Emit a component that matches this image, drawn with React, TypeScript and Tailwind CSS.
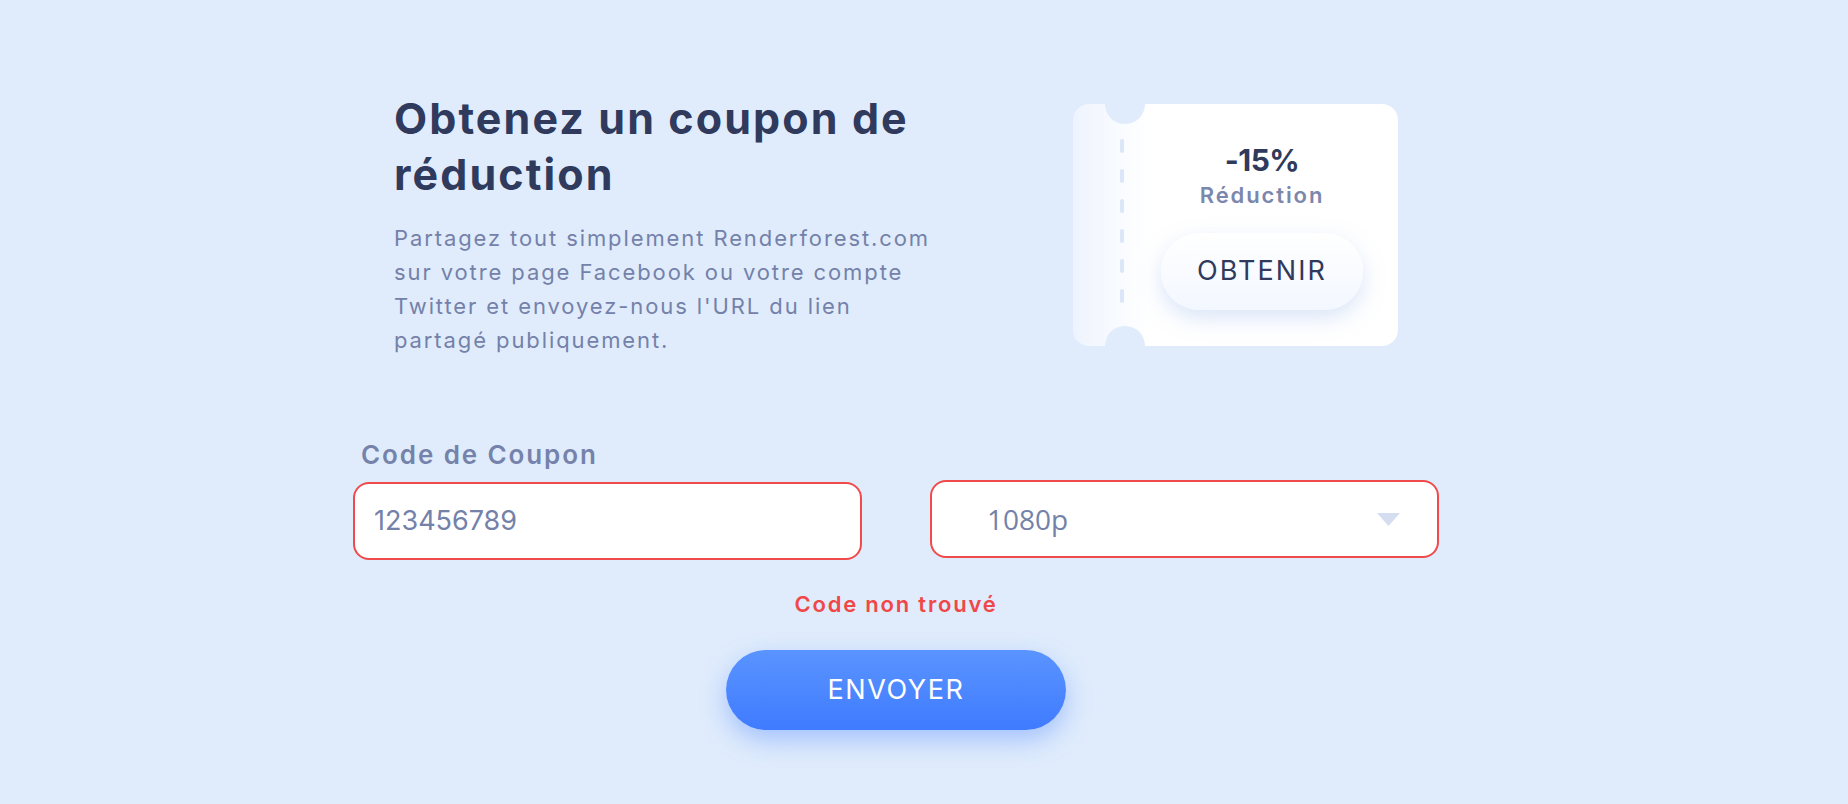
import React from "react";

export default function App() {
  const font = { fontFamily: "Inter, 'Noto Sans', sans-serif" };
  return (
    <div className="min-h-[804px] w-full bg-[#e0ecfc]" style={font}>
      <div className="flex justify-center pr-[56px]">
        <div className="w-[1086px] pt-[90px]">
          {/* top section */}
          <div className="flex items-start justify-between pl-[41px] pr-[41px]">
            <div>
              <h1 className="text-[43px] leading-[56px] font-bold text-[#2f3a5c] whitespace-nowrap tracking-[2.1px]">
                Obtenez un coupon de
                <br />
                réduction
              </h1>
              <p className="mt-[19px] text-[22px] leading-[34px] text-[#7481a9] whitespace-nowrap tracking-[1.9px]">
                Partagez tout simplement Renderforest.com
                <br />
                sur votre page Facebook ou votre compte
                <br />
                Twitter et envoyez-nous l'URL du lien
                <br />
                partagé publiquement.
              </p>
            </div>
            <div className="relative mt-[14px] flex h-[242px] w-[325px] rounded-[16px] bg-[linear-gradient(to_right,#eef4fe_0px,#ffffff_75px)]">
              <div className="absolute left-[32px] top-[-20px] h-[40px] w-[40px] rounded-full bg-[#e0ecfc]" />
              <div className="absolute left-[32px] bottom-[-20px] h-[40px] w-[40px] rounded-full bg-[#e0ecfc]" />
              <div className="w-[53px] shrink-0 flex justify-end">
                <div className="mt-[35px] mr-[2px] flex flex-col gap-[16px]">
                  {[0, 1, 2, 3, 4, 5].map((i) => (
                    <div key={i} className="h-[14px] w-[4px] rounded-full bg-[#dbe6f8]" />
                  ))}
                </div>
              </div>
              <div className="flex flex-1 flex-col items-center pt-[38px]">
                <div className="text-[30px] leading-[36px] font-bold text-[#2f3a5c] tracking-[-0.5px]">-15%</div>
                <div className="mt-[3px] text-[22px] leading-[28px] font-semibold text-[#7b87ad] tracking-[1.9px]">Réduction</div>
                <button className="mt-[24px] flex h-[77px] w-[202px] items-center justify-center rounded-full bg-[linear-gradient(to_bottom,#ffffff,#f3f7ff)] text-[27px] text-[#2f3a5c] tracking-[2.1px] shadow-[0_8px_22px_rgba(150,180,235,0.35)]">
                  OBTENIR
                </button>
              </div>
            </div>
          </div>

          {/* form */}
          <div className="mt-[83px]">
            <div className="pl-[8px] text-[26px] leading-[30px] font-semibold text-[#7583ab] tracking-[1.9px]">Code de Coupon</div>
            <div className="mt-[10px] flex items-start justify-between">
              <div className="mt-[2px] flex h-[78px] w-[509px] items-center rounded-[16px] border-2 border-[#f04a4a] bg-white pl-[19px] text-[27px] text-[#7481a9]">
                123456789
              </div>
              <div className="flex h-[78px] w-[509px] items-center justify-between rounded-[16px] border-2 border-[#f04a4a] bg-white pl-[55px] pr-[37px]">
                <span className="text-[28px] text-[#7481a9]" style={{ fontFamily: "'Open Sans', sans-serif" }}>1080p</span>
                <svg width="23" height="13" viewBox="0 0 23 13">
                  <path d="M0 0 L23 0 L11.5 13 Z" fill="#d5def0" />
                </svg>
              </div>
            </div>
            <div className="mt-[31px] text-center text-[22px] leading-[26px] font-semibold text-[#f04848] tracking-[1.8px]">
              Code non trouvé
            </div>
            <div className="mt-[33px] flex justify-center">
              <button className="flex h-[80px] w-[340px] items-center justify-center rounded-full bg-[linear-gradient(to_bottom,#5a94ff,#3f7bff)] text-[27px] text-white tracking-[1.6px] shadow-[0_10px_26px_rgba(70,130,255,0.4)]">
                ENVOYER
              </button>
            </div>
          </div>
        </div>
      </div>
    </div>
  );
}
